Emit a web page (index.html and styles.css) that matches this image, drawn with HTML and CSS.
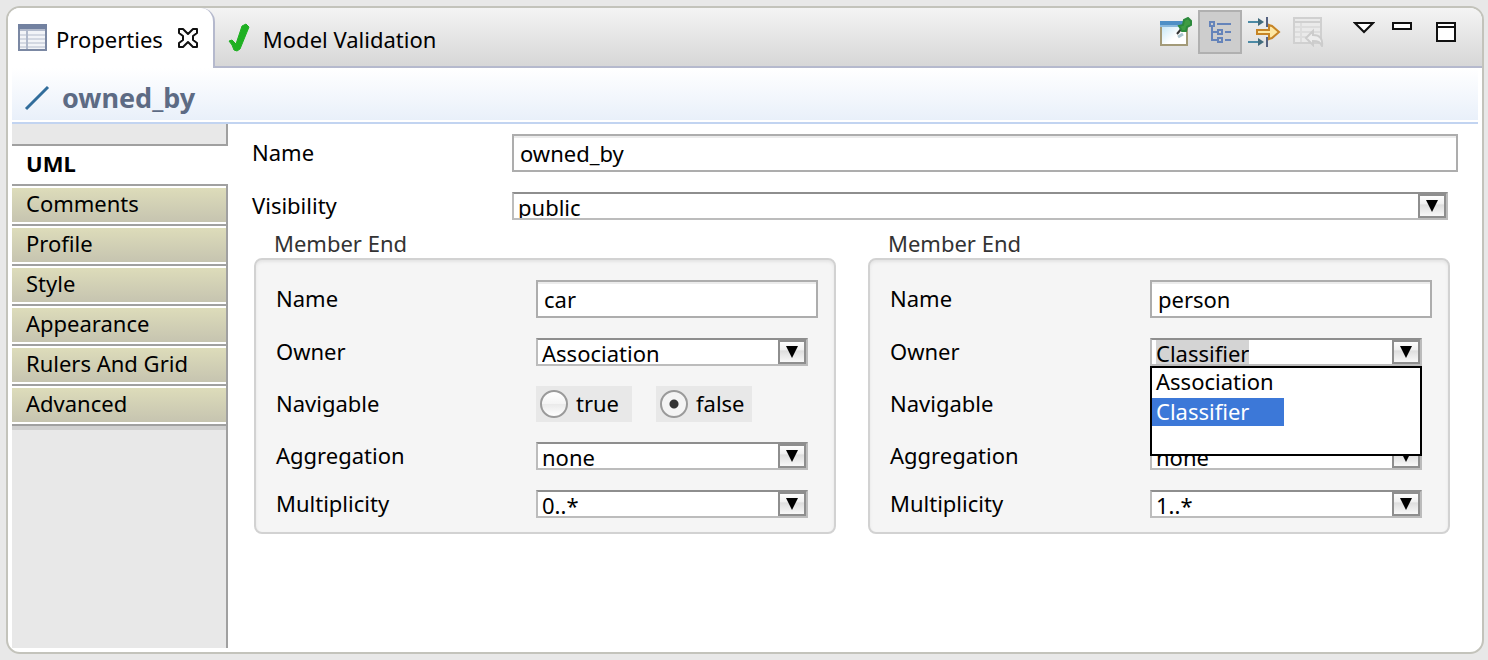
FILE: index.html
```html
<!DOCTYPE html>
<html lang="en">
<head>
<meta charset="utf-8">
<title>Properties</title>
<link rel="stylesheet" href="styles.css">
</head>
<body>
<main class="panel">
  <header class="tabbar">
    <div class="tabs" role="tablist">
      <div class="tab tab-active">
        <button class="tab-label" type="button" role="tab" aria-selected="true">
          <svg class="tab-icon" width="30" height="28" viewBox="0 0 30 28" aria-hidden="true">
            <rect x="1" y="1" width="27" height="25" fill="#f2f4f8" stroke="#7b88a3" stroke-width="2"/>
            <rect x="0" y="0" width="29" height="5" fill="#7281a0"/>
            <path d="M2 6H27" stroke="#b4bccd" stroke-width="2"/>
            <path d="M2 11H27M2 15H27M2 19H27M2 23H27" stroke="#d3d8e2" stroke-width="2"/>
            <path d="M9 5V25" stroke="#b0b9cb" stroke-width="2"/>
          </svg>
          <span>Properties</span>
        </button>
        <button class="icon-button" type="button" aria-label="Close Properties">
          <svg class="tab-icon" width="22" height="22" viewBox="0 0 22 22" aria-hidden="true">
            <path d="M2 2H6L11 7L16 2H20V6L16 9V13L20 16V20H16L11 15L6 20H2V16L6 13V9L2 6Z" fill="#fff" stroke="#111" stroke-width="2" stroke-linejoin="round"/>
          </svg>
        </button>
      </div>
      <div class="tab">
        <button class="tab-label" type="button" role="tab" aria-selected="false">
          <svg class="tab-icon" width="24" height="30" viewBox="0 0 24 30" aria-hidden="true">
            <path d="M2 18L5 17L9 21L15 3L19 1L22 4L13 26L10 28L7 27L5 22Z" fill="#1fb022" stroke="#1fb022" stroke-width="1" stroke-linejoin="round"/>
          </svg>
          <span>Model Validation</span>
        </button>
      </div>
    </div>
    <div class="tools">
      <button class="tool" type="button" aria-label="Pin view">
        <svg width="34" height="30" viewBox="0 0 34 30" aria-hidden="true">
          <defs><linearGradient id="sky" x1="0" y1="0" x2="1" y2="1"><stop offset="0" stop-color="#b9e2f5"/><stop offset="0.600" stop-color="#fff"/></linearGradient></defs>
          <rect x="2" y="5" width="26" height="23" fill="url(#sky)" stroke="#a39a78" stroke-width="2"/>
          <rect x="1" y="4" width="28" height="6" fill="#4d8fc6"/>
          <path d="M1 9H28" stroke="#8ab9dc" stroke-width="2"/>
          <path d="M19 20L24 17" stroke="#a9c3cd" stroke-width="3"/>
          <path d="M18 17L23 11" stroke="#333" stroke-width="2"/>
          <path d="M20 9L24 8L25 3L29 1L32 4V8L28 10L27 14L23 14Z" fill="#3f9c43" stroke="#2c8a3c" stroke-width="2"/>
        </svg>
      </button>
      <button class="tool tool-on" type="button" aria-label="Show categories" aria-pressed="true">
        <svg width="24" height="24" viewBox="0 0 24 24" fill="none" stroke="#6584ba" stroke-width="2" aria-hidden="true">
          <path d="M2 2H6V6H2ZM10 10H14V14H10ZM10 18H14V22H10ZM4 6V20H10M4 12H10M9 4H23M17 12H23M17 20H23"/>
        </svg>
      </button>
      <button class="tool" type="button" aria-label="Show advanced properties">
        <svg width="34" height="32" viewBox="0 0 34 32" aria-hidden="true">
          <path d="M1 6H12M1 26H12" stroke="#4c8aa5" stroke-width="2"/>
          <path d="M11 2L17 6L11 10ZM11 22L17 26L11 30Z" fill="#426b7d"/>
          <path d="M20 1V11M20 21V31" stroke="#566280" stroke-width="2"/>
          <path d="M10 14H22V9L25 10L32 16L25 22L22 23V18H10Z" fill="#fde7a4" stroke="#c68425" stroke-width="2"/>
        </svg>
      </button>
      <button class="tool tool-last" type="button" aria-label="Restore default value" disabled>
        <svg width="32" height="30" viewBox="0 0 32 30" fill="none" aria-hidden="true">
          <path d="M2 1H29V26H2Z" fill="#eaeaea" stroke="#d0d0d0" stroke-width="2"/>
          <path d="M3 5H28" stroke="#d0d0d0" stroke-width="2"/>
          <path d="M3 10H28M3 15H28M3 20H28M9 6V25" stroke="#dddddd" stroke-width="2"/>
          <path d="M14 21L21 14V18C28 18 31 22 30 29C28 25 26 24 21 24V28Z" fill="#ededed" stroke="#cccccc" stroke-width="2"/>
        </svg>
      </button>
      <button class="tool tool-window tool-menu" type="button" aria-label="View menu">
        <svg width="22" height="12" viewBox="0 0 22 12" aria-hidden="true"><path d="M2 1H20L11 10Z" fill="#fff" stroke="#111" stroke-width="2"/></svg>
      </button>
      <button class="tool tool-window" type="button" aria-label="Minimize">
        <svg width="20" height="8" viewBox="0 0 20 8" aria-hidden="true"><path d="M1 1H19V7H1Z" fill="#fff" stroke="#111" stroke-width="2"/></svg>
      </button>
      <button class="tool tool-window" type="button" aria-label="Maximize">
        <svg width="20" height="20" viewBox="0 0 20 20" aria-hidden="true"><path d="M1 1H19V19H1ZM1 5H19" fill="#fff" stroke="#111" stroke-width="2"/></svg>
      </button>
    </div>
  </header>

  <div class="title">
    <svg width="26" height="26" viewBox="0 0 26 26" aria-hidden="true"><path d="M2 24L24 2" stroke="#316d9b" stroke-width="3"/></svg>
    <h1>owned_by</h1>
  </div>

  <div class="body">
    <nav class="side" aria-label="Property sections">
      <a class="side-item side-current" href="#uml" aria-current="page">UML</a>
      <a class="side-item" href="#comments">Comments</a>
      <a class="side-item" href="#profile">Profile</a>
      <a class="side-item" href="#style">Style</a>
      <a class="side-item" href="#appearance">Appearance</a>
      <a class="side-item" href="#rulers">Rulers And Grid</a>
      <a class="side-item side-end" href="#advanced">Advanced</a>
    </nav>

    <form class="form" id="uml">
      <div class="rows">
        <label class="name" for="name">Name</label>
        <input class="text" id="name" type="text" value="owned_by">
        <label class="name" for="visibility">Visibility</label>
        <div class="combo">
          <select id="visibility"><option>public</option></select>
          <svg class="arrow" viewBox="0 0 28 24" aria-hidden="true"><use href="#arrow"/></svg>
        </div>
      </div>

      <div class="ends">
        <fieldset class="end">
          <legend>Member End</legend>
          <div class="rows box">
            <label class="name" for="name-a">Name</label>
            <input class="text" id="name-a" type="text" value="car">
            <label class="name" for="owner-a">Owner</label>
            <div class="combo">
              <select id="owner-a"><option>Association</option><option>Classifier</option></select>
              <svg class="arrow" viewBox="0 0 28 24" aria-hidden="true"><use href="#arrow"/></svg>
            </div>
            <span class="name" id="nav-a">Navigable</span>
            <div class="radios" role="radiogroup" aria-labelledby="nav-a">
              <label class="radio"><input type="radio" name="nav-a"><span class="name">true</span></label>
              <label class="radio"><input type="radio" name="nav-a" checked><span class="name">false</span></label>
            </div>
            <label class="name" for="agg-a">Aggregation</label>
            <div class="combo">
              <select id="agg-a"><option>none</option></select>
              <svg class="arrow" viewBox="0 0 28 24" aria-hidden="true"><use href="#arrow"/></svg>
            </div>
            <label class="name" for="mult-a">Multiplicity</label>
            <div class="combo">
              <select id="mult-a"><option>0..*</option></select>
              <svg class="arrow" viewBox="0 0 28 24" aria-hidden="true"><use href="#arrow"/></svg>
            </div>
          </div>
        </fieldset>

        <fieldset class="end">
          <legend>Member End</legend>
          <div class="rows box">
            <label class="name" for="name-b">Name</label>
            <input class="text" id="name-b" type="text" value="person">
            <label class="name" for="owner-b">Owner</label>
            <div class="combo combo-open">
              <select id="owner-b"><option>Association</option><option selected>Classifier</option></select>
              <svg class="arrow" viewBox="0 0 28 24" aria-hidden="true"><use href="#arrow"/></svg>
              <div class="popup">
                <ul class="options" role="listbox" aria-label="Owner">
                  <li role="option" aria-selected="false">Association</li>
                  <li role="option" aria-selected="true">Classifier</li>
                </ul>
              </div>
            </div>
            <span class="name" id="nav-b">Navigable</span>
            <div class="radios" role="radiogroup" aria-labelledby="nav-b"></div>
            <label class="name" for="agg-b">Aggregation</label>
            <div class="combo">
              <select id="agg-b"><option>none</option></select>
              <svg class="arrow" viewBox="0 0 28 24" aria-hidden="true"><use href="#arrow"/></svg>
            </div>
            <label class="name" for="mult-b">Multiplicity</label>
            <div class="combo">
              <select id="mult-b"><option>1..*</option></select>
              <svg class="arrow" viewBox="0 0 28 24" aria-hidden="true"><use href="#arrow"/></svg>
            </div>
          </div>
        </fieldset>
      </div>
    </form>
  </div>
</main>

<svg class="defs" width="0" height="0" aria-hidden="true">
  <linearGradient id="face" x1="0" y1="0" x2="0" y2="1"><stop offset="0" stop-color="#fff"/><stop offset="0.400" stop-color="#f0f0f0"/><stop offset="0.450" stop-color="#dedede"/><stop offset="1" stop-color="#fafafa"/></linearGradient>
  <symbol id="arrow" viewBox="0 0 28 24">
    <rect x="1" y="1" width="26" height="22" fill="url(#face)" stroke="#8e8e8e" stroke-width="2"/>
    <path d="M8 6H20L14 18Z" fill="#000"/>
  </symbol>
</svg>
</body>
</html>
```
FILE: styles.css
```css
* {
  box-sizing: border-box;
}

body {
  margin: 0;
  min-height: 100vh;
  display: flex;
  padding: 6px 4px 6px 6px;
  background: #e8e8e8;
  color: #000;
  font: 22px/28px "Noto Sans", "Open Sans", sans-serif;
}

button,
input,
select {
  font: inherit;
  color: inherit;
}

button {
  display: flex;
  padding: 0;
  border: 0;
  background: none;
}

svg {
  display: block;
}

.defs {
  position: absolute;
}

.panel {
  flex: 1;
  display: flex;
  flex-direction: column;
  padding-bottom: 4px;
  border: 2px solid #c3c3bb;
  border-radius: 14px;
  background: #fff;
}

/* Tab bar */
.tabbar {
  display: flex;
  justify-content: space-between;
  height: 60px;
  border-radius: 12px 12px 0 0;
  background: linear-gradient(#f4f4f4, #d6d6d6);
  box-shadow: inset 0 -2px #b5b9cd;
}

.tabs {
  display: flex;
}

.tab {
  display: flex;
  align-items: center;
  gap: 14px;
  padding: 2px 12px 0;
}

.tab-active {
  padding: 2px 14px 0 10px;
  border-right: 2px solid #b5b9cd;
  border-radius: 12px 14px 0 0;
  background: #fff;
}

.tab-label {
  align-items: center;
  gap: 12px;
}

.tab-active .tab-label {
  gap: 8px;
}

.tab-icon {
  margin-bottom: 2px;
}

.icon-button {
  align-items: center;
}

.tools {
  display: flex;
  align-items: flex-start;
  padding: 2px 14px 0 0;
}

.tool {
  align-items: center;
  justify-content: center;
  width: 44px;
  height: 44px;
}

.tool-on {
  border: 2px solid #b0b0b0;
  background: #cdcdcd;
}

.tool-last {
  margin-right: 18px;
}

.tool-window {
  align-items: flex-start;
  padding-top: 12px;
}

.tool-menu {
  width: 32px;
}

/* Title */
.title {
  display: flex;
  align-items: center;
  gap: 12px;
  height: 56px;
  margin: 0 4px;
  padding: 6px 12px 0;
  border-bottom: 2px solid #c2d4f1;
  background: linear-gradient(#fff, #e9f0fa 52px, #fff 52px);
}

.title h1 {
  margin: 0;
  color: #5d6b84;
  font-size: 27px;
  line-height: 32px;
}

/* Section list */
.body {
  flex: 1;
  display: flex;
  padding-left: 4px;
}

.side {
  width: 216px;
  padding-top: 20px;
  border-right: 2px solid #a0a0a0;
  background: #e8e8e8;
}

.side-item {
  display: block;
  height: 40px;
  padding: 4px 14px 8px;
  border-top: 2px solid #fff;
  border-bottom: 2px solid #a0a0a0;
  background: linear-gradient(#dddcba, #c6c4b0 34px, #fff 34px);
  color: #000;
  line-height: 22px;
  text-decoration: none;
}

.side-current {
  height: 42px;
  margin-right: -2px;
  padding: 6px 14px;
  border-top-color: #a0a0a0;
  background: #fff;
  font-weight: bold;
}

.side-end {
  box-shadow: 0 4px #d0d0d0;
}

/* Form */
.form {
  flex: 1;
  padding: 10px 24px 0;
}

.rows {
  display: grid;
  grid-template-columns: 260px minmax(0, 1fr);
  row-gap: 20px;
  align-items: center;
}

.name {
  line-height: 24px;
  padding-bottom: 2px;
}

.text {
  width: 100%;
  height: 38px;
  padding: 0 6px;
  border: 2px solid #adadad;
  background: #fff;
  box-shadow: inset 0 2px #ececec;
}

.combo {
  position: relative;
  display: flex;
  justify-content: space-between;
  height: 28px;
  margin-right: 10px;
  padding-left: 4px;
  border: 2px solid #bcbcbc;
  border-top-color: #8e8e8e;
  background: #fff;
}

.combo select {
  appearance: none;
  flex: 1;
  height: 24px;
  padding: 0;
  border: 0;
  outline: 0;
  background: none;
  line-height: 26px;
}

.combo-open select {
  flex: none;
  field-sizing: content;
  background: #d4d4d4;
}

.arrow {
  width: 28px;
  height: 24px;
}

.popup {
  position: absolute;
  z-index: 1;
  top: 26px;
  right: -2px;
  left: -2px;
  height: 90px;
  border: 2px solid #000;
  background: #fff;
}

.options {
  display: grid;
  gap: 2px;
  width: max-content;
  margin: 0;
  padding: 0;
  list-style: none;
}

.options li {
  padding: 0 10px 2px 4px;
  line-height: 26px;
}

.options [aria-selected="true"] {
  background: #3c78d8;
  color: #fff;
}

.ends {
  display: grid;
  grid-template-columns: 1fr 1fr;
  gap: 32px;
  padding: 10px 8px 0 2px;
}

.end {
  min-width: 0;
  margin: 0;
  padding: 0;
  border: 0;
}

.end legend {
  padding: 0 20px 2px;
  color: #333;
  line-height: 26px;
}

.box {
  padding: 20px 16px 14px 20px;
  border: 2px solid #d2d2d2;
  border-radius: 8px;
  background: #f5f5f5;
  box-shadow: inset 0 2px 3px #e4e4e4;
}

.radios {
  display: flex;
  gap: 24px;
  height: 36px;
}

.radio {
  display: flex;
  align-items: center;
  gap: 8px;
  width: 96px;
  padding-left: 4px;
  background: #e8e8e8;
}

.radio input {
  appearance: none;
  width: 28px;
  height: 28px;
  margin: 0;
  border: 2px solid #9a9a9a;
  border-radius: 50%;
  background: linear-gradient(#fff, #f4f4f4 50%, #e9e9e9 50%, #fff);
}

.radio input:checked {
  background: radial-gradient(circle, #333 4px, #f4f4f4 5px);
}
```
